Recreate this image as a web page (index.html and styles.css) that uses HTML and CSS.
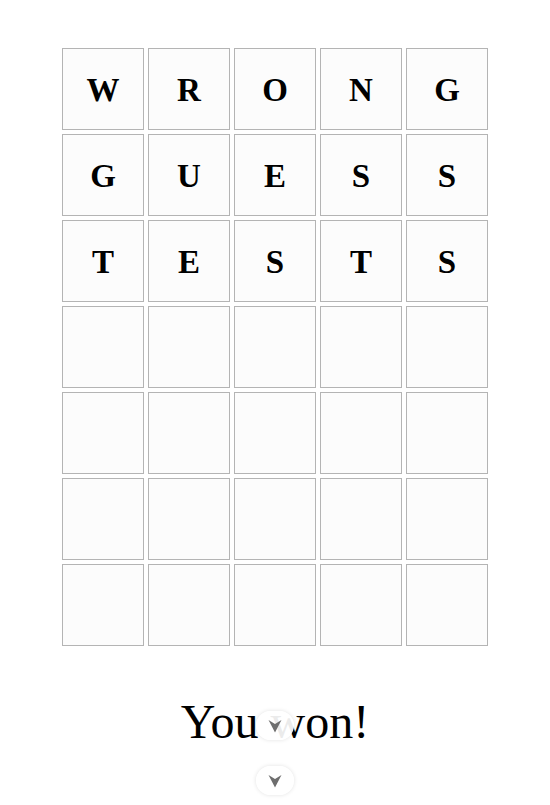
FILE: index.html
```html
<!DOCTYPE html>
<html lang="en">
<head>
<meta charset="utf-8">
<title>Wordle</title>
<link rel="stylesheet" href="styles.css">
</head>
<body>
<main class="game">
  <div class="board">
    <div class="cell">W</div><div class="cell">R</div><div class="cell">O</div><div class="cell">N</div><div class="cell">G</div>
    <div class="cell">G</div><div class="cell">U</div><div class="cell">E</div><div class="cell">S</div><div class="cell">S</div>
    <div class="cell">T</div><div class="cell">E</div><div class="cell">S</div><div class="cell">T</div><div class="cell">S</div>
    <div class="cell"></div><div class="cell"></div><div class="cell"></div><div class="cell"></div><div class="cell"></div>
    <div class="cell"></div><div class="cell"></div><div class="cell"></div><div class="cell"></div><div class="cell"></div>
    <div class="cell"></div><div class="cell"></div><div class="cell"></div><div class="cell"></div><div class="cell"></div>
    <div class="cell"></div><div class="cell"></div><div class="cell"></div><div class="cell"></div><div class="cell"></div>
  </div>
  <p class="result">You won!</p>
</main>
<button class="scroll-btn scroll-btn-a" aria-label="Scroll down">
  <svg width="14" height="14" viewBox="0 0 14 14"><path d="M0.5 1 L7 5 L13.5 1 L7 13.5 Z"/></svg>
</button>
<button class="scroll-btn scroll-btn-b" aria-label="Scroll down">
  <svg width="14" height="14" viewBox="0 0 14 14"><path d="M0.5 1 L7 5 L13.5 1 L7 13.5 Z"/></svg>
</button>
</body>
</html>
```
FILE: styles.css
```css
html, body {
  margin: 0;
  padding: 0;
  background: #ffffff;
}
body {
  font-family: "Liberation Serif", "Times New Roman", serif;
  color: #000;
  width: 550px;
  height: 805px;
  overflow: hidden;
  position: relative;
}
.game {
  display: flex;
  flex-direction: column;
  align-items: center;
  padding-top: 48px;
}
.board {
  display: grid;
  grid-template-columns: repeat(5, 82px);
  grid-auto-rows: 82px;
  gap: 4px;
}
.cell {
  box-sizing: border-box;
  border: 1px solid #b4b4b4;
  background: #fcfcfc;
  display: flex;
  align-items: center;
  justify-content: center;
  font-weight: bold;
  font-size: 33px;
  line-height: 1;
  padding-top: 2px;
}
.result {
  margin: 48px 0 0;
  font-size: 48px;
  line-height: 56px;
}
.scroll-btn {
  position: absolute;
  left: 256px;
  width: 38px;
  height: 29px;
  border: none;
  border-radius: 15px;
  background: rgba(255,255,255,0.92);
  box-shadow: 0 0 4px rgba(0,0,0,0.12);
  display: flex;
  align-items: center;
  justify-content: center;
  padding: 0;
}
.scroll-btn svg {
  fill: #6e6e6e;
  filter: blur(0.7px);
  margin-top: 1px;
}
.scroll-btn-a { top: 711px; }
.scroll-btn-b { top: 766px; }
```
